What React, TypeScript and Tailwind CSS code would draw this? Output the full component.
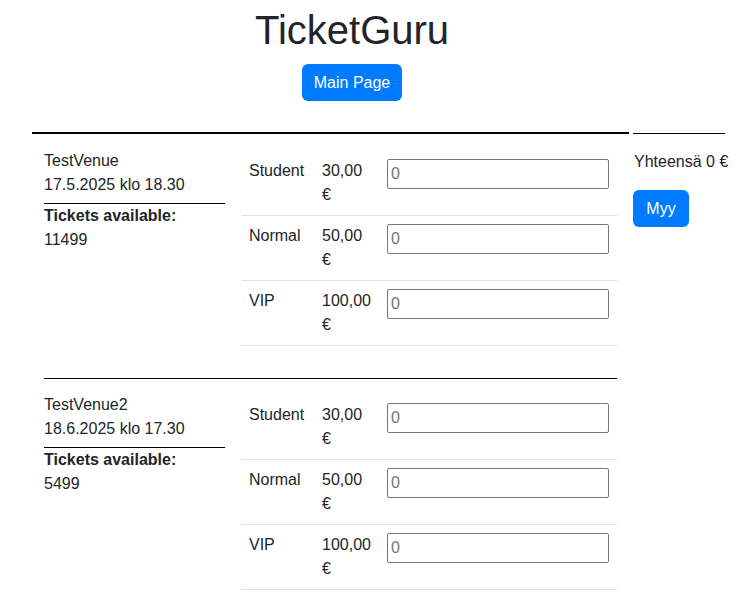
const events = [
  {
    name: 'TestVenue',
    date: '17.5.2025 klo 18.30',
    available: 11499,
    first: true,
  },
  {
    name: 'TestVenue2',
    date: '18.6.2025 klo 17.30',
    available: 5499,
    first: false,
  },
];

const ticketTypes = [
  { type: 'Student', price: '30,00' },
  { type: 'Normal', price: '50,00' },
  { type: 'VIP', price: '100,00' },
];

function EventBlock({ ev }: { ev: (typeof events)[number] }) {
  return (
    <div className={ev.first ? 'flex pb-8' : 'flex border-t border-black pb-8'}>
      <div className={ev.first ? 'w-[181px] pt-[15px]' : 'w-[181px] pt-[14px]'}>
        <div>{ev.name}</div>
        <div>{ev.date}</div>
        <div className="mt-[6px] border-t border-black">
          <div className="font-bold">Tickets available:</div>
          <div>{ev.available}</div>
        </div>
      </div>
      <div className={ev.first ? 'ml-4 flex-1 pt-[17px]' : 'ml-4 flex-1 pt-[16px]'}>
        {ticketTypes.map((t) => (
          <div key={t.type} className="flex border-b border-[#dee2e6] py-2">
            <div className="w-[73px] px-2">{t.type}</div>
            <div className="w-[65px] px-2">
              {t.price}
              <br />€
            </div>
            <div className="flex-1 pl-2 pr-2">
              <input
                type="text"
                placeholder="0"
                className="h-[30px] w-full rounded-[2px] border border-[#767676] px-[3px] text-base placeholder:text-[#757575]"
              />
            </div>
          </div>
        ))}
      </div>
    </div>
  );
}

export default function App() {
  return (
    <div className="min-h-[610px] bg-white text-base leading-6 text-[#212529] [font-family:'Liberation_Sans',Arial,sans-serif]">
      <div className="w-[704px] pt-[6px] text-center">
        <h1 className="text-[40px] leading-[48px]">TicketGuru</h1>
        <button className="mt-[10px] h-[37px] w-[100px] rounded-md bg-[#007bff] text-white">
          Main Page
        </button>
      </div>

      <div className="mt-[31px] flex">
        <div className="ml-[32px] w-[597px] border-t-2 border-black px-3">
          {events.map((ev) => (
            <EventBlock key={ev.name} ev={ev} />
          ))}
        </div>
        <div className="ml-[4px] mt-[1px] w-[92px] self-start border-t border-black pt-[16px]">
          <div className="whitespace-nowrap pl-px">Yhteensä 0 €</div>
          <button className="mt-[16px] h-[37px] w-[56px] rounded-md bg-[#007bff] text-white">
            Myy
          </button>
        </div>
      </div>
    </div>
  );
}
